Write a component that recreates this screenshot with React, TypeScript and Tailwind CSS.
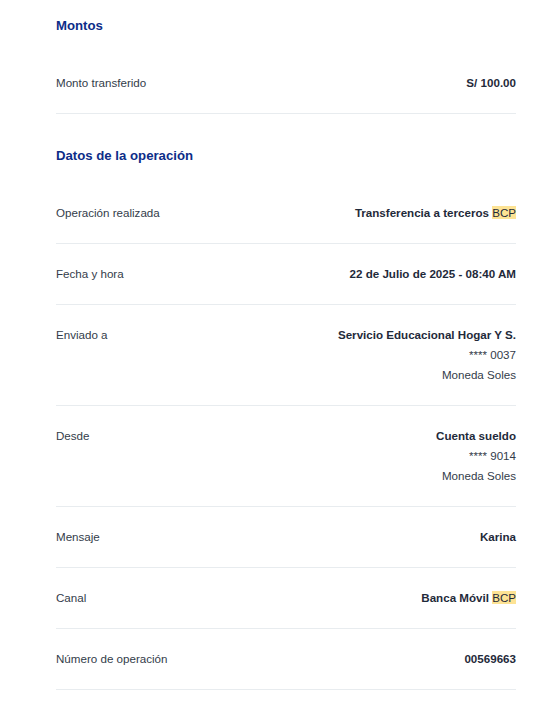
const rows: { label: string; lines: React.ReactNode[] }[] = [
  { label: 'Operación realizada', lines: [<>Transferencia a terceros <Bcp /></>] },
  { label: 'Fecha y hora', lines: ['22 de Julio de 2025 - 08:40 AM'] },
  { label: 'Enviado a', lines: ['Servicio Educacional Hogar Y S.', '**** 0037', 'Moneda Soles'] },
  { label: 'Desde', lines: ['Cuenta sueldo', '**** 9014', 'Moneda Soles'] },
  { label: 'Mensaje', lines: ['Karina'] },
  { label: 'Canal', lines: [<>Banca Móvil <Bcp /></>] },
  { label: 'Número de operación', lines: ['00569663'] },
];

function Bcp() {
  return <span className="bg-[#fde394] font-normal">BCP</span>;
}

function Row({ label, lines }: { label: string; lines: React.ReactNode[] }) {
  return (
    <div className="flex justify-between py-5 border-b border-[#e8ecef]">
      <span className="text-[11.6px] leading-5 text-[#333c4a]">{label}</span>
      <div className="flex flex-col items-end text-[11.6px] leading-5 text-[#1f2a3a]">
        {lines.map((line, i) => (
          <span key={i} className={i === 0 ? 'font-bold' : 'text-[#333c4a]'}>
            {line}
          </span>
        ))}
      </div>
    </div>
  );
}

export default function App() {
  return (
    <div className="min-h-screen bg-white pl-14 pt-4 pr-[41px]" style={{ fontFamily: '"Liberation Sans", Arial, sans-serif' }}>
      <h2 className="text-[13.2px] leading-5 font-bold text-[#0d2d88]">Montos</h2>
      <div className="mt-[17px]">
        <div className="flex justify-between py-5 border-b border-[#e8ecef]">
          <span className="text-[11.6px] leading-5 text-[#333c4a]">Monto transferido</span>
          <span className="text-[11.6px] leading-5 font-bold text-[#1f2a3a]">S/ 100.00</span>
        </div>
      </div>
      <div className="mt-8">
        <h2 className="text-[13.2px] leading-5 font-bold text-[#0d2d88] mb-[17px]">Datos de la operación</h2>
        {rows.map((r) => (
          <Row key={r.label} label={r.label} lines={r.lines} />
        ))}
      </div>
    </div>
  );
}
